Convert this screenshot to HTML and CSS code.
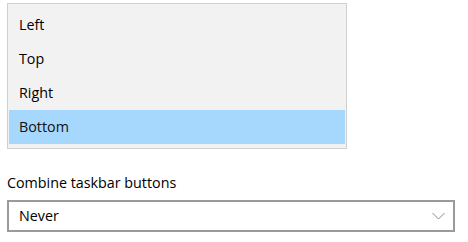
FILE: index.html
```html
<!DOCTYPE html>
<html>
<head>
<meta charset="utf-8">
<link rel="stylesheet" href="styles.css">
</head>
<body>
<div class="page">
  <ul class="list">
    <li class="item">Left</li>
    <li class="item">Top</li>
    <li class="item">Right</li>
    <li class="item selected">Bottom</li>
  </ul>
  <div class="label">Combine taskbar buttons</div>
  <div class="combo">
    <span class="value">Never</span>
    <svg class="chev" width="13" height="8" viewBox="0 0 13 8"><path d="M0.5 1 L6.5 7 L12.5 1" fill="none" stroke="#8a8a8a" stroke-width="1"/></svg>
  </div>
</div>
</body>
</html>
```
FILE: styles.css
```css
html, body {
  margin: 0;
  padding: 0;
  background: #fff;
}
.page {
  padding: 3px 0 0 7px;
  font-family: "Open Sans", "Noto Sans", sans-serif;
  font-size: 14.3px;
  color: #000;
}
.list {
  list-style: none;
  margin: 0;
  width: 336px;
  padding: 4px 1px;
  border: 1px solid #cfcfcf;
  background: #f2f2f2;
}
.item {
  height: 34px;
  line-height: 34px;
  padding-left: 10px;
}
.selected {
  background: #a6d7fd;
  color: #111;
}
.label {
  margin-top: 24px;
  line-height: 20px;
  height: 20px;
}
.combo {
  margin-top: 7px;
  width: 426px;
  height: 28px;
  border: 2px solid #9a9a9a;
  display: flex;
  align-items: center;
  justify-content: space-between;
  padding: 0 8px 0 10px;
}
.value {
  line-height: 28px;
}
.chev {
  display: block;
}
```
